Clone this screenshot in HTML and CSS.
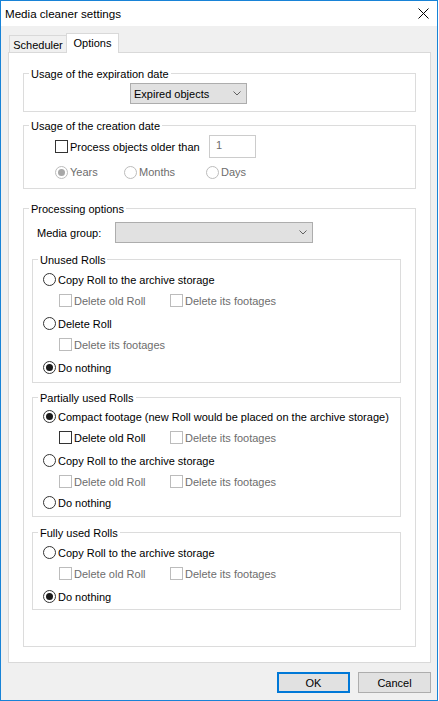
FILE: index.html
```html
<!DOCTYPE html>
<html>
<head>
<meta charset="utf-8">
<title>Media cleaner settings</title>
<link rel="stylesheet" href="styles.css">
</head>
<body>
<div class="window">
  <div class="titlebar">
    <span class="title">Media cleaner settings</span>
    <svg class="close" width="11" height="11" viewBox="0 0 11 11"><path d="M0.5 0.5L10.5 10.5M10.5 0.5L0.5 10.5" stroke="#000" stroke-width="1" fill="none"/></svg>
  </div>
  <div class="client">
    <div class="tabs">
      <div class="tab">Scheduler</div>
      <div class="tab active">Options</div>
    </div>
    <div class="panel">
      <div class="group g-exp">
        <div class="legend">Usage of the expiration date</div>
        <div class="combo combo-exp">
          <span>Expired objects</span>
          <svg class="chev" width="8" height="5" viewBox="0 0 8 5"><path d="M0.5 0.5L4 4L7.5 0.5" fill="none" stroke="#606060" stroke-width="1"/></svg>
        </div>
      </div>

      <div class="group g-cre">
        <div class="legend">Usage of the creation date</div>
        <div class="older-row">
          <span class="chk"></span>
          <span class="lbl lbl-older">Process objects older than</span>
          <div class="textbox dis">1</div>
        </div>
        <div class="period-row dis">
          <div class="period p-years"><span class="radio on"></span><span class="lbl">Years</span></div>
          <div class="period p-months"><span class="radio"></span><span class="lbl">Months</span></div>
          <div class="period"><span class="radio"></span><span class="lbl">Days</span></div>
        </div>
      </div>

      <div class="group g-proc">
        <div class="legend">Processing options</div>
        <div class="media-row">
          <span class="media-lbl">Media group:</span>
          <div class="combo combo-media">
            <span></span>
            <svg class="chev" width="8" height="5" viewBox="0 0 8 5"><path d="M0.5 0.5L4 4L7.5 0.5" fill="none" stroke="#606060" stroke-width="1"/></svg>
          </div>
        </div>

        <div class="group sub g-unused">
          <div class="legend">Unused Rolls</div>
          <div class="row rrow mt2"><span class="radio"></span><span class="lbl">Copy Roll to the archive storage</span></div>
          <div class="row crow dis">
            <div class="citem"><span class="chk"></span><span class="lbl">Delete old Roll</span></div>
            <div class="citem"><span class="chk"></span><span class="lbl">Delete its footages</span></div>
          </div>
          <div class="row rrow mt2"><span class="radio"></span><span class="lbl">Delete Roll</span></div>
          <div class="row crow dis">
            <div class="citem"><span class="chk"></span><span class="lbl">Delete its footages</span></div>
          </div>
          <div class="row rrow mt2"><span class="radio on"></span><span class="lbl">Do nothing</span></div>
        </div>

        <div class="group sub g-partial">
          <div class="legend">Partially used Rolls</div>
          <div class="row rrow mt1"><span class="radio on"></span><span class="lbl">Compact footage (new Roll would be placed on the archive storage)</span></div>
          <div class="row crow">
            <div class="citem"><span class="chk"></span><span class="lbl">Delete old Roll</span></div>
            <div class="citem dis"><span class="chk"></span><span class="lbl">Delete its footages</span></div>
          </div>
          <div class="row rrow mt2"><span class="radio"></span><span class="lbl">Copy Roll to the archive storage</span></div>
          <div class="row crow dis">
            <div class="citem"><span class="chk"></span><span class="lbl">Delete old Roll</span></div>
            <div class="citem"><span class="chk"></span><span class="lbl">Delete its footages</span></div>
          </div>
          <div class="row rrow"><span class="radio"></span><span class="lbl">Do nothing</span></div>
        </div>

        <div class="group sub g-full">
          <div class="legend">Fully used Rolls</div>
          <div class="row rrow mt2"><span class="radio"></span><span class="lbl">Copy Roll to the archive storage</span></div>
          <div class="row crow dis">
            <div class="citem"><span class="chk"></span><span class="lbl">Delete old Roll</span></div>
            <div class="citem"><span class="chk"></span><span class="lbl">Delete its footages</span></div>
          </div>
          <div class="row rrow mt2"><span class="radio on"></span><span class="lbl">Do nothing</span></div>
        </div>
      </div>
    </div>
    <div class="buttons">
      <button class="btn ok">OK</button>
      <button class="btn">Cancel</button>
    </div>
  </div>
</div>
</body>
</html>
```

FILE: styles.css
```css
* { box-sizing: border-box; }
html, body { margin: 0; padding: 0; background: #fff; }
body {
  font-family: "Liberation Sans", Arial, sans-serif;
  font-size: 11px;
  color: #000;
}
.window {
  width: 438px;
  height: 701px;
  border: 1px solid #1883d7;
  background: #f0f0f0;
  display: flex;
  flex-direction: column;
}
.titlebar {
  height: 25px;
  flex: none;
  background: #fff;
  display: flex;
  align-items: center;
  padding: 0 8px 0 4px;
}
.title { flex: 1; font-size: 11.6px; }
.close { display: block; }
.client { flex: 1; display: flex; flex-direction: column; }

.tabs {
  display: flex;
  height: 20px;
  margin: 7px 0 -1px 8px;
  position: relative;
  z-index: 1;
}
.tab {
  width: 57px;
  height: 17px;
  margin-top: 2px;
  border: 1px solid #d9d9d9;
  border-bottom: none;
  border-right: none;
  background: #f0f0f0;
  text-align: center;
  line-height: 17px;
  padding-top: 1px;
}
.tab.active {
  width: 53px;
  height: 20px;
  margin-top: 0;
  background: #fff;
  border-right: 1px solid #d9d9d9;
  line-height: 18px;
  padding-top: 0;
}
.panel {
  height: 611px;
  margin: 0 6px 0 7px;
  border: 1px solid #d9d9d9;
  background: #fff;
  padding: 0 14px;
}

.group { border: 1px solid #dcdcdc; }
.legend {
  width: max-content;
  height: 14px;
  line-height: 14px;
  margin: -7px 0 0 5px;
  padding: 0 2px;
  background: #fff;
}
.g-exp { margin-top: 20px; padding-bottom: 7px; }
.g-cre { margin-top: 13px; padding-bottom: 5px; }
.g-proc { margin-top: 19px; padding-bottom: 36px; }
.sub { margin-left: 8px; margin-right: 14px; }
.g-unused { margin-top: 16px; padding-bottom: 4px; }
.g-partial { margin-top: 14px; padding-bottom: 3px; }
.g-full { margin-top: 15px; padding-bottom: 2px; }

.combo {
  height: 21px;
  border: 1px solid #adadad;
  background: #e1e1e1;
  display: flex;
  align-items: center;
  justify-content: space-between;
  padding: 0 5px 0 3px;
}
.chev { display: block; }
.combo-exp { width: 117px; margin: 2px 0 0 106px; }
.combo-media { width: 198px; }

.older-row {
  display: flex;
  align-items: center;
  height: 23px;
  margin-top: 2px;
  padding-left: 31px;
}
.lbl { margin-left: 2px; white-space: nowrap; }
.lbl-older { width: 139px; }
.textbox {
  width: 47px;
  height: 23px;
  border: 1px solid #cccccc;
  background: #fff;
  padding: 3px 0 0 6px;
  color: #6d6d6d;
}
.period-row {
  display: flex;
  align-items: center;
  height: 22px;
  margin-top: 3px;
  padding-left: 31px;
}
.period { display: flex; align-items: center; }
.p-years { width: 69px; }
.p-months { width: 82px; }

.media-row {
  display: flex;
  align-items: center;
  height: 21px;
  margin-top: 6px;
  padding-left: 13px;
}
.media-lbl { width: 78px; }

.row { display: flex; align-items: center; height: 21px; }
.rrow { padding-left: 10px; }
.crow { padding-left: 26px; }
.mt1 { margin-top: 1px; }
.mt2 { margin-top: 2px; }
.citem { display: flex; align-items: center; width: 111px; }

.radio {
  flex: none;
  width: 13px;
  height: 13px;
  border: 1px solid #333;
  border-radius: 50%;
  background: #fff;
  display: flex;
  align-items: center;
  justify-content: center;
}
.radio.on::after {
  content: "";
  width: 7px;
  height: 7px;
  border-radius: 50%;
  background: #1a1a1a;
}
.chk {
  flex: none;
  width: 13px;
  height: 13px;
  border: 1px solid #333;
  background: #fff;
}
.dis { color: #6d6d6d; }
.dis .chk, .dis .radio { border-color: #bcbcbc; }
.dis .radio.on::after { background: #a8a8a8; }

.buttons {
  display: flex;
  justify-content: flex-end;
  gap: 8px;
  margin: 9px 6px 0 0;
}
.btn {
  width: 73px;
  height: 21px;
  border: 1px solid #adadad;
  background: #e1e1e1;
  font: inherit;
  color: #000;
  padding: 0;
}
.btn.ok { border: 2px solid #0078d7; }
```
